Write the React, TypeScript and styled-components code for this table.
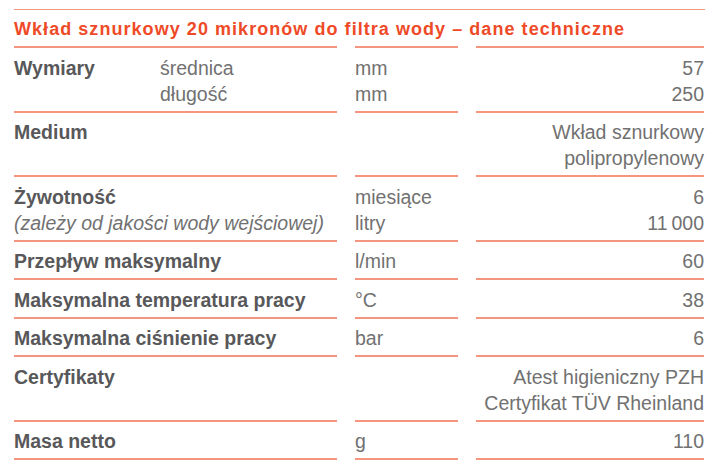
import styled, { createGlobalStyle } from "styled-components";

const GlobalStyle = createGlobalStyle`
  html, body {
    margin: 0;
    padding: 0;
    background: #fff;
  }
  body {
    font-family: "Liberation Sans", Arial, sans-serif;
  }
`;

const LINE = "#f59580";

const Sheet = styled.div`
  width: 691px;
  padding: 9px 8px 0 14px;
`;

const Title = styled.h1`
  margin: 0;
  border-top: 1px solid ${LINE};
  padding: 7px 0 4px;
  font-size: 18px;
  line-height: 25px;
  letter-spacing: 1.05px;
  font-weight: 700;
  color: #ef4a28;
  white-space: nowrap;
`;

const Row = styled.div`
  display: grid;
  grid-template-columns: 323px 103px 228px;
  column-gap: 18px;
`;

const Cell = styled.div<{ $last?: boolean; $align?: "left" | "right" }>`
  border-top: 2px solid ${LINE};
  border-bottom: ${(p) => (p.$last ? `2px solid ${LINE}` : "none")};
  padding: 6.5px 0 4px;
  font-size: 19.5px;
  line-height: 26px;
  color: #717171;
  text-align: ${(p) => p.$align ?? "left"};
  white-space: nowrap;
`;

const LabelWrap = styled.div`
  display: grid;
  grid-template-columns: 146px 1fr;
`;

const Label = styled.div`
  font-weight: 700;
  color: #58585a;
`;

const Note = styled.div`
  font-style: italic;
  color: #717171;
`;

const Line = styled.div``;

type Spec = {
  label: string;
  sub?: string[];
  note?: string;
  units: string[];
  values: string[];
};

const specs: Spec[] = [
  { label: "Wymiary", sub: ["średnica", "długość"], units: ["mm", "mm"], values: ["57", "250"] },
  { label: "Medium", units: [], values: ["Wkład sznurkowy", "polipropylenowy"] },
  {
    label: "Żywotność",
    note: "(zależy od jakości wody wejściowej)",
    units: ["miesiące", "litry"],
    values: ["6", "11\u2009000"],
  },
  { label: "Przepływ maksymalny", units: ["l/min"], values: ["60"] },
  { label: "Maksymalna temperatura pracy", units: ["°C"], values: ["38"] },
  { label: "Maksymalna ciśnienie pracy", units: ["bar"], values: ["6"] },
  { label: "Certyfikaty", units: [], values: ["Atest higieniczny PZH", "Certyfikat TÜV Rheinland"] },
  { label: "Masa netto", units: ["g"], values: ["110"] },
];

const SpecRow = ({ spec, last }: { spec: Spec; last: boolean }) => (
  <Row>
    <Cell $last={last}>
      {spec.sub ? (
        <LabelWrap>
          <Label>{spec.label}</Label>
          <div>
            {spec.sub.map((s) => (
              <Line key={s}>{s}</Line>
            ))}
          </div>
        </LabelWrap>
      ) : (
        <>
          <Label>{spec.label}</Label>
          {spec.note && <Note>{spec.note}</Note>}
        </>
      )}
    </Cell>
    <Cell $last={last}>
      {spec.units.map((u, i) => (
        <Line key={i}>{u}</Line>
      ))}
    </Cell>
    <Cell $last={last} $align="right">
      {spec.values.map((v, i) => (
        <Line key={i}>{v}</Line>
      ))}
    </Cell>
  </Row>
);

export default function App() {
  return (
    <>
      <GlobalStyle />
      <Sheet>
        <Title>Wkład sznurkowy 20 mikronów do filtra wody – dane techniczne</Title>
        {specs.map((s, i) => (
          <SpecRow key={s.label} spec={s} last={i === specs.length - 1} />
        ))}
      </Sheet>
    </>
  );
}
